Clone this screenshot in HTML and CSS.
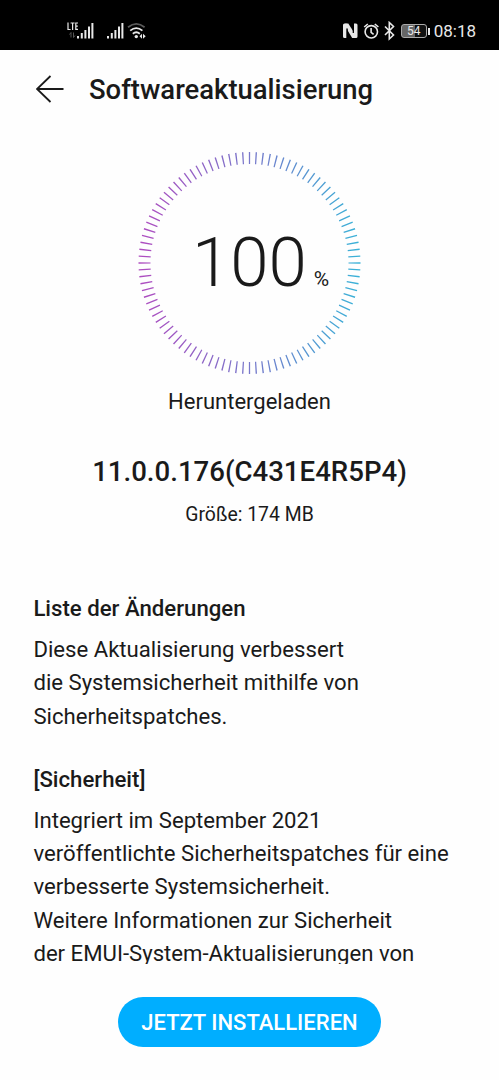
FILE: index.html
```html
<!DOCTYPE html>
<html lang="de">
<head>
    <meta charset="UTF-8">
    <meta name="viewport" content="width=device-width, initial-scale=1.0">
    <title>Softwareaktualisierung</title>
    <link rel="stylesheet" href="styles.css">
</head>
<body>
    <div class="statusbar">
        <svg class="signal" width="82" height="20" viewBox="0 0 82 20">
            <g stroke="#e8e8e8" stroke-width="1.2" fill="none">
                <path d="M1 1.500v7h2.600M3.600 2h4M5.600 2v7M11 2H8.800v6.400H11M8.800 5.100h2"/>
            </g>
            <path d="M4 16.500v-5l-1.500 2M6.500 11.500v5l1.500-2" stroke="#555" fill="none"/>
            <g fill="#e8e8e8">
                <path d="M10 15h2v2.500h-2zM13.800 12h2v5.500h-2zM17.400 9h2v8.500h-2zM21 5.500h2v12h-2zM24.400 2h2v15.500h-2z"/>
                <path d="M40 15h2v2.500h-2zM43.800 12h2v5.500h-2zM47.400 9h2v8.500h-2zM51 5.500h2v12h-2zM54.400 2h2v15.500h-2z"/>
                <circle cx="69.300" cy="15.600" r="1.700"/>
                <path d="M75 12.800v5l-2.500-2.500zM76 12.800v5l2.700-2.500z"/>
            </g>
            <g fill="none" stroke-width="1.800">
                <path d="M61 6.200q8.300-6.600 16.600 0" stroke="#5a5a5a"/>
                <path d="M63.200 9.600q6.100-5 12.200 0M65.800 12.700q3.500-2.800 7 0" stroke="#e8e8e8"/>
            </g>
        </svg>
        <div class="status-right">
            <svg width="54" height="20" viewBox="0 0 54 20">
                <g fill="#e8e8e8">
                    <path d="M2 4q0-1.500 1.500-1.500h2v14.500H3.500Q2 17 2 15.500zM16.500 4q0-1.500-1.500-1.500h-2v14.500h2q1.500 0 1.500-1.500z"/>
                    <path d="M4.500 2.500h2.800L14 13v4h-2.800L4.500 6z"/>
                </g>
                <path d="M6.200 7.500V17M12.300 2.500V12" stroke="#000" stroke-width="1.200"/>
                <g fill="none" stroke="#e8e8e8" stroke-width="1.600">
                    <circle cx="30.300" cy="10.800" r="6.200"/>
                    <path d="M30.100 7v4.300l2.500 2M23.200 6l3.600-3M37.400 6l-3.600-3"/>
                    <path d="M44 5.500l8.500 8.500-4.200 4V1.500l4.200 4L44 14"/>
                </g>
            </svg>
            <div class="battery"><span>54</span></div>
            <div class="time">08:18</div>
        </div>
    </div>

    <div class="header">
        <svg width="28" height="28" viewBox="0 0 28 28">
            <path d="M14.500 1L1 14l13.500 13M1 14h26.500" fill="none" stroke="#1a1a1a" stroke-width="1.800"/>
        </svg>
        <h1>Softwareaktualisierung</h1>
    </div>

    <div class="progress">
        <svg class="ring" width="224" height="224" viewBox="0 0 224 224">
            <defs>
                <linearGradient id="ring-color" gradientUnits="userSpaceOnUse" x1="0" y1="0" x2="224" y2="0">
                    <stop offset="0" stop-color="#b04cc0"/>
                    <stop offset="0.500" stop-color="#7878cb"/>
                    <stop offset="1" stop-color="#38b4d8"/>
                </linearGradient>
            </defs>
            <circle cx="111.500" cy="112" r="105" pathLength="100"/>
        </svg>
        <div class="percent"><span class="number">100</span><span class="unit">%</span></div>
    </div>
    <p class="state">Heruntergeladen</p>

    <h2 class="version">11.0.0.176(C431E4R5P4)</h2>
    <p class="size">Größe: 174 MB</p>

    <div class="changes">
        <h3>Liste der Änderungen</h3>
        <p>Diese Aktualisierung verbessert<br>die Systemsicherheit mithilfe von<br>Sicherheitspatches.</p>
        <h3>[Sicherheit]</h3>
        <p>Integriert im September 2021<br>veröffentlichte Sicherheitspatches für eine<br>verbesserte Systemsicherheit.<br>Weitere Informationen zur Sicherheit<br>der EMUI-System-Aktualisierungen von</p>
    </div>

    <div class="footer">
        <button>JETZT INSTALLIEREN</button>
    </div>
</body>
</html>
```
FILE: styles.css
```css
* {
    box-sizing: border-box;
}
body {
    font-family: Roboto, "Liberation Sans", sans-serif;
    background-color: #fefefe;
    color: #1a1a1a;
    margin: 0;
    height: 1080px;
    display: flex;
    flex-direction: column;
    overflow: hidden;
}
h1, h2, h3, p {
    margin: 0;
    font-weight: 500;
}
p {
    font-weight: 400;
}
.statusbar {
    height: 50px;
    flex-shrink: 0;
    background: #000;
    color: #e8e8e8;
    display: flex;
    justify-content: space-between;
    padding: 21px 23px 0 67px;
}
.status-right {
    display: flex;
}
.battery {
    width: 26px;
    height: 14px;
    margin: 3px 7px 0 6px;
    border: 1px solid #aaa;
    border-radius: 3px;
    background: linear-gradient(to right, #666 54%, #111 54%);
    font-size: 12px;
    line-height: 13px;
    text-align: center;
    position: relative;
}
.battery::after {
    content: "";
    position: absolute;
    right: -4px;
    top: 3px;
    width: 2px;
    height: 7px;
    background: #e8e8e8;
}
.time {
    font-size: 17px;
    line-height: 20px;
}
.header {
    height: 78px;
    flex-shrink: 0;
    display: flex;
    align-items: center;
    padding-left: 36px;
    gap: 25px;
}
h1 {
    font-size: 27.45px;
    line-height: 32px;
    padding-top: 1px;
}
.progress {
    display: grid;
    width: 224px;
    height: 224px;
    margin: 23px 0 0 138px;
    flex-shrink: 0;
}
.ring, .percent {
    grid-area: 1 / 1;
}
.ring circle {
    fill: none;
    stroke: url(#ring-color);
    stroke-width: 12;
    stroke-dasharray: 0.2 0.8;
    stroke-dashoffset: 0.1;
}
.percent {
    display: flex;
    align-items: baseline;
    padding: 71px 0 0 54px;
}
.number {
    font-size: 69px;
    font-weight: 300;
    line-height: 82px;
}
.unit {
    font-size: 21px;
    margin-left: 7px;
}
.state {
    font-size: 22px;
    line-height: 32px;
    margin-top: 11px;
    text-align: center;
}
.version {
    font-size: 27.6px;
    line-height: 32px;
    margin-top: 38px;
    text-align: center;
}
.size {
    font-size: 19.4px;
    line-height: 28px;
    margin-top: 13px;
    text-align: center;
}
.changes {
    height: 372px;
    flex-shrink: 0;
    margin-top: 63px;
    padding-left: 33.4px;
    white-space: nowrap;
    overflow: hidden;
}
h3 {
    font-size: 22.2px;
    line-height: 33px;
}
.changes p {
    font-size: 22.15px;
    line-height: 33.3px;
    margin: 8px 0 30px;
}
.footer {
    margin-top: auto;
    height: 83px;
    flex-shrink: 0;
    text-align: center;
}
button {
    width: 263px;
    height: 50px;
    border: none;
    border-radius: 25px;
    background: #00aeff;
    color: #fff;
    font-family: inherit;
    font-size: 22px;
    font-weight: 500;
    cursor: pointer;
}
```
